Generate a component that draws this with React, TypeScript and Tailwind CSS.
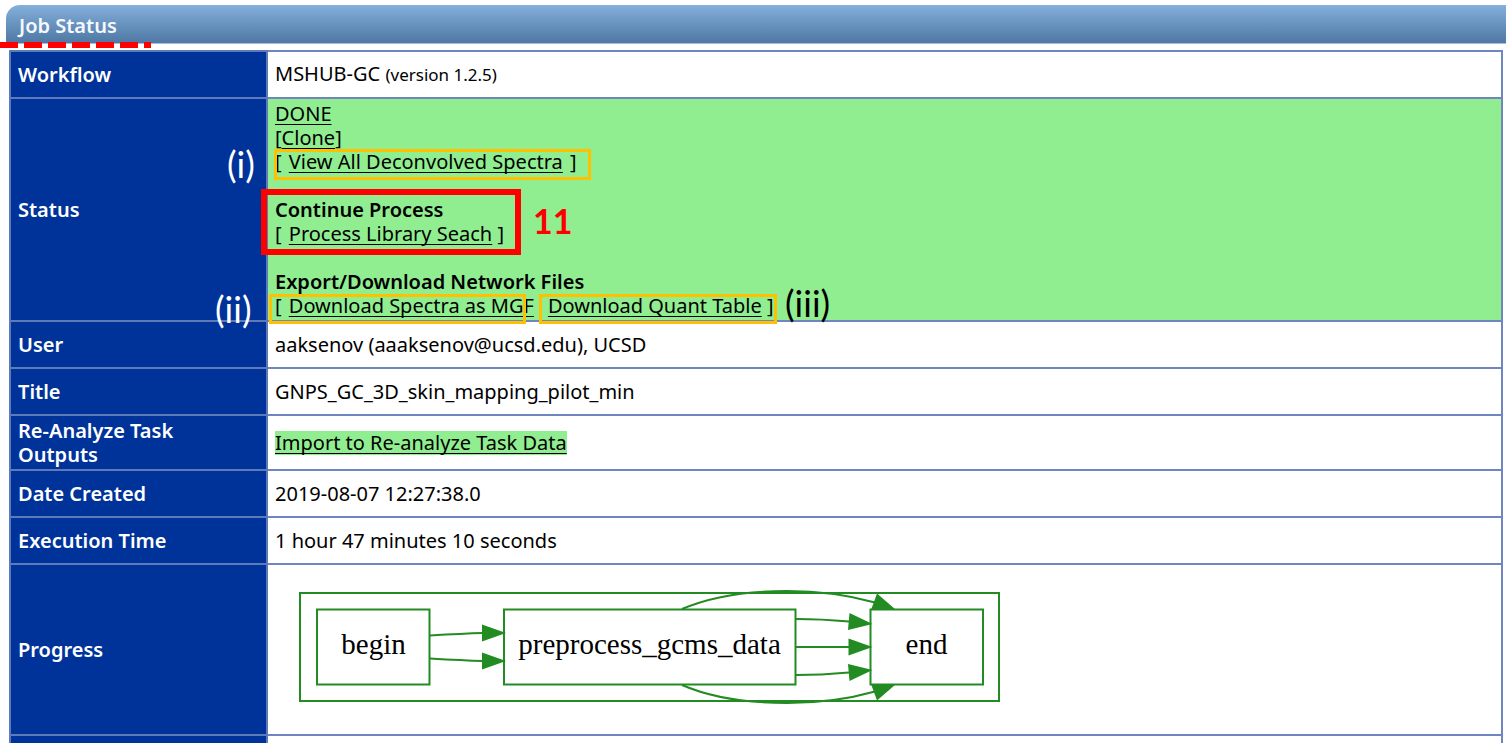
import type { ReactNode } from 'react';

const link = 'underline decoration-1 underline-offset-[3px] [text-decoration-skip-ink:none] text-black';
const note = "pointer-events-none absolute whitespace-nowrap font-['Lato',sans-serif] leading-10";

function Row({ label, className = 'h-[47px]', cellClass = '', children }: {
  label: string;
  className?: string;
  cellClass?: string;
  children?: ReactNode;
}) {
  return (
    <tr className={className}>
      <th scope="row" className="border-2 border-[#5f7ab8] bg-[#003399] pr-4 pl-[7px] text-left align-middle font-semibold text-white">
        {label}
      </th>
      <td className={`border-2 border-[#6f86c0] px-[7px] align-middle ${cellClass}`}>{children}</td>
    </tr>
  );
}

function StatusLinks() {
  return (
    <div className="relative">
      <p><a href="#done" className={link}>DONE</a></p>
      <p>[<a href="#clone" className={link}>Clone</a>]</p>
      <p className="mb-6">[ <a href="#spectra" className={`${link} mx-0.5`}>View All Deconvolved Spectra</a> ]</p>
      <h2 className="font-semibold">Continue Process</h2>
      <p className="mb-6">[ <a href="#library" className={`${link} ml-0.5`}>Process Library Seach</a> ]</p>
      <h2 className="font-semibold">Export/Download Network Files</h2>
      <div className="flex gap-3.5">
        <p>[ <a href="#mgf" className={`${link} ml-0.5`}>Download Spectra as MGF</a></p>
        <p><a href="#quant" className={link}>Download Quant Table</a> ]</p>
      </div>

      <div className="pointer-events-none absolute -left-px top-[47px] h-[31px] w-[317px] border-3 border-[#ffc000]" />
      <div className="pointer-events-none absolute -left-3.5 top-[87px] h-[66px] w-[260px] border-6 border-[#ff0000]" />
      <div className="pointer-events-none absolute -left-1.5 top-48 h-[30px] w-[257px] border-3 border-[#ffc000]" />
      <div className="pointer-events-none absolute left-66 top-48 h-[30px] w-[238px] border-3 border-[#ffc000]" />
      <span className={`${note} -left-12 top-[42px] text-[36px] text-white`}>(i)</span>
      <span className={`${note} -left-[60px] top-[187px] text-[36px] text-white`}>(ii)</span>
      <span className={`${note} left-[510px] top-[181px] text-[36px] text-black`}>(iii)</span>
      <span className={`${note} left-[258px] top-[99px] text-[34px] font-bold text-[#ff0000]`}>11</span>
    </div>
  );
}

function ProgressGraph() {
  return (
    <svg viewBox="296 589 710 122" role="img" aria-label="Workflow progress" className="ml-[21px] h-[122px] w-[710px]">
      <g fill="none" stroke="#228b22" strokeWidth="2">
        <rect x="300" y="593" width="699" height="108" />
        <rect x="317" y="609.500" width="112.500" height="75" />
        <rect x="504" y="609.500" width="291.500" height="75" />
        <rect x="870.500" y="609.500" width="112.500" height="75" />
        <path d="M430 635.500C447 634.500 465 633.500 483 633" />
        <path d="M430 658.500C447 659.500 465 660.500 483 661" />
        <path d="M796 619C814 619 832 620 849 621.500" />
        <path d="M796 647H849" />
        <path d="M796 675C814 675 832 674 849 672.500" />
        <path d="M682 609C712 596 749 591 787 591C815 591 845 594 875 602.500" />
        <path d="M682 685C712 698 749 703 787 703C815 703 845 700 875 691.500" />
      </g>
      <g fill="#228b22">
        <path d="M482 624.500L506 633L482 641.500Z" />
        <path d="M482 652.500L506 661L482 669.500Z" />
        <path d="M849.500 613L872.500 624L848 630Z" />
        <path d="M848.500 638.500L872.500 647L848.500 655.500Z" />
        <path d="M849.500 681L872.500 670L848 664Z" />
        <path d="M877 593.500L895.500 609.500L871 610Z" />
        <path d="M877 700.500L895.500 684.500L871 684Z" />
      </g>
      <g fill="#000" textAnchor="middle" className="font-['Liberation_Serif',serif] text-[29px]">
        <text x="373.500" y="654">begin</text>
        <text x="649.500" y="654">preprocess_gcms_data</text>
        <text x="926.500" y="654">end</text>
      </g>
    </svg>
  );
}

export default function App() {
  return (
    <main className="relative h-screen overflow-hidden bg-white pt-[5px] font-['Noto_Sans',sans-serif] text-[20px] leading-6 text-black">
      <header className="mx-1.5 flex h-[39px] items-center rounded-tl-[14px] border-b border-[#a9bcd2] bg-linear-to-b from-[#84b0dc] to-[#4f78a4] px-[13px] pt-[3px]">
        <h1 className="font-semibold text-[#f5f8fc]">Job Status</h1>
      </header>
      <div className="absolute left-0 top-[42px] h-1.5 w-[151px] bg-[repeating-linear-gradient(90deg,#ff0000_0_18px,transparent_18px_24px)]" />
      <div className="mt-1.5 px-[9px]">
        <table className="w-full table-fixed border-collapse">
          <colgroup>
            <col className="w-[257px]" />
            <col />
          </colgroup>
          <tbody>
            <Row label="Workflow">MSHUB-GC <span className="text-[17px]">(version 1.2.5)</span></Row>
            <Row label="Status" className="h-[223px]" cellClass="bg-[#90ee90]"><StatusLinks /></Row>
            <Row label="User">aaksenov (aaaksenov@ucsd.edu), UCSD</Row>
            <Row label="Title">GNPS_GC_3D_skin_mapping_pilot_min</Row>
            <Row label="Re-Analyze Task Outputs" className="h-[55px]">
              <a href="#import" className={`${link} inline-block bg-[#90ee90]`}>Import to Re-analyze Task Data</a>
            </Row>
            <Row label="Date Created">2019-08-07 12:27:38.0</Row>
            <Row label="Execution Time">1 hour 47 minutes 10 seconds</Row>
            <Row label="Progress" className="h-[171px]"><ProgressGraph /></Row>
            <Row label="" />
          </tbody>
        </table>
      </div>
    </main>
  );
}
